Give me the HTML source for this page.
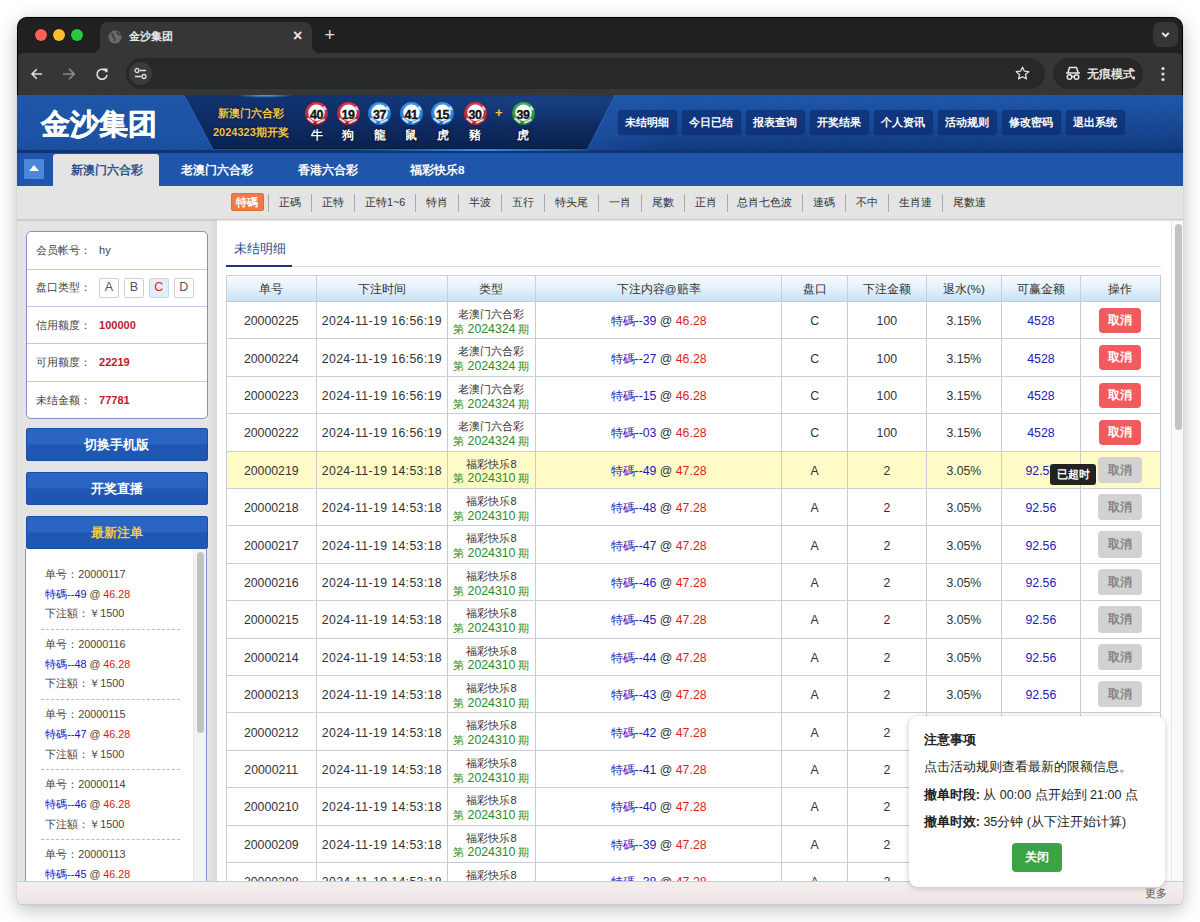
<!DOCTYPE html>
<html><head><meta charset="utf-8">
<style>
*{margin:0;padding:0;box-sizing:border-box}
html,body{width:1200px;height:922px;overflow:hidden;background:#fff;font-family:"Liberation Sans",sans-serif}
.abs{position:absolute}
#win{position:absolute;left:17px;top:17px;width:1166px;height:888px;border-radius:10px 10px 6px 6px;overflow:hidden;background:#202020;box-shadow:0 5px 20px rgba(0,0,0,.25),0 0 2px rgba(0,0,0,.15)}
#ring{position:absolute;left:0;top:0;width:1166px;height:90px;border:1px solid #000;border-bottom:none;border-radius:10px 10px 0 0;pointer-events:none}
/* chrome */
.tl{position:absolute;top:12px;width:12px;height:12px;border-radius:50%;box-shadow:0 0 0 .6px rgba(0,0,0,.35)}
#tab{position:absolute;left:83px;top:5px;width:212px;height:31px;background:#363636;border-radius:8px 8px 0 0}
#tab:before,#tab:after{content:"";position:absolute;bottom:0;width:8px;height:8px}
#tab:before{left:-8px;background:radial-gradient(circle at 0 0,transparent 8px,#363636 8.5px)}
#tab:after{right:-8px;background:radial-gradient(circle at 100% 0,transparent 8px,#363636 8.5px)}
#toolbar{position:absolute;left:0;top:36px;width:1166px;height:42px;background:#363636;border-radius:6px 6px 0 0}
#omni{position:absolute;left:109px;top:5px;width:919px;height:31px;border-radius:16px;background:#282828}
#incog{position:absolute;left:1036px;top:5px;width:90px;height:31px;border-radius:16px;background:#282828;color:#e6e6e6;font-size:11.5px;font-weight:bold}
/* page */
#page{position:absolute;left:0;top:78px;width:1166px;height:810px;background:#e5e5e5;overflow:hidden}

#hdr{position:absolute;left:0;top:0;width:1166px;height:58px;background-image:repeating-linear-gradient(135deg,rgba(255,255,255,.015) 0 1.5px,transparent 1.5px 4px),linear-gradient(180deg,#1d55a8 0%,#1c52a4 70%,#1a4c9c 95%)}
#hdrR{position:absolute;left:540px;top:0;width:626px;height:55px;background:linear-gradient(180deg,rgba(0,15,60,0) 10%,rgba(0,15,60,.32) 100%);-webkit-mask-image:linear-gradient(90deg,transparent,#000 120px)}
#hband{position:absolute;left:0;top:55px;width:1166px;height:2.5px;background:#0d3474}
#dark{position:absolute;left:0;top:0}
#glow{position:absolute;left:196px;top:52px;width:375px;height:2px;background:linear-gradient(90deg,rgba(60,160,255,0),rgba(80,180,255,.9) 50%,rgba(60,160,255,0))}
#glow2{position:absolute;left:218px;top:0;width:60px;height:3px;background:radial-gradient(ellipse at 50% 0,rgba(90,190,255,.9),rgba(60,160,255,0) 70%)}
#logo{position:absolute;left:24px;top:9.5px;font-size:29px;font-weight:bold;color:#fff;-webkit-text-stroke:.5px #fff;letter-spacing:0px}
.ky{position:absolute;font-size:11px;font-weight:bold;color:#f3c33f;white-space:nowrap;text-shadow:0 0 2px #051433}
.ball{position:absolute;top:7px;width:23px;height:23px;border-radius:50%}
.ball b{position:absolute;left:3px;top:4.5px;width:17px;height:16px;font-size:12.5px;line-height:16px;-webkit-text-stroke:.35px #111;text-align:center;color:#111;letter-spacing:-.5px}
.zod{position:absolute;top:32px;width:23px;text-align:center;font-size:12px;font-weight:bold;color:#fff;text-shadow:0 0 1px #000,0 0 2px #000}
.red{background:radial-gradient(circle at 50% 45%,#fff 0 7.5px,#c82b3e 8px,#a81d2f 11.5px)}
.blue{background:radial-gradient(circle at 50% 45%,#fff 0 7.5px,#2f8fe0 8px,#1a67c0 11.5px)}
.green{background:radial-gradient(circle at 50% 45%,#fff 0 7.5px,#3aa055 8px,#1f7a38 11.5px)}
.nb{position:absolute;top:15.3px;width:58.8px;height:25.2px;background:rgba(10,40,105,.6);border-radius:3px;box-shadow:0 0 0 1px rgba(30,70,140,.45);color:#fff;font-size:11px;font-weight:bold;text-align:center;line-height:24.5px;box-shadow:0 0 1px rgba(0,0,0,.2)}
#nav{position:absolute;left:0;top:57.5px;width:1166px;height:33px;background:#1f56ab}
#tog{position:absolute;left:7px;top:6.5px;width:20px;height:19.5px;background:#4a88dc;border-radius:1px}
#tog:after{content:"";position:absolute;left:4.5px;top:6px;border-left:5.5px solid transparent;border-right:5.5px solid transparent;border-bottom:6.5px solid #fff}
.tb{position:absolute;top:0;height:33px;line-height:34px;font-size:11.8px;font-weight:bold;color:#fff;white-space:nowrap}
#tact{position:absolute;left:35.5px;top:1px;width:106.5px;height:32px;background:#e4e4e4;border-radius:3px 3px 0 0}
#sub{position:absolute;left:0;top:90.5px;width:1166px;height:34.5px;background:#e4e4e4;border-bottom:1px solid #c9c9c9;box-shadow:0 1px 1px rgba(0,0,0,.08)}
.si{position:absolute;top:0;height:34px;line-height:33px;font-size:10.8px;color:#333;white-space:nowrap}
.sep{position:absolute;top:8px;width:1px;height:18px;background:#aaa}
#sact{position:absolute;left:213.5px;top:7.5px;width:33px;height:18px;background:#f07a45;border:1px solid #e8683a;border-radius:2px;color:#fff;font-weight:bold;font-size:11px;line-height:16px;text-align:center}

#side{position:absolute;left:0;top:125px;width:200px;height:661px;background:#e4e4e4}
#sidesh{position:absolute;left:191px;top:125px;width:9px;height:661px;background:linear-gradient(90deg,#e4e4e4,#d9d9d9)}
#info{position:absolute;left:8.6px;top:136px;width:182.8px;height:187.5px;border:1px solid #7e92c4;border-radius:5px;background:#fff;overflow:hidden}
.ir{position:absolute;left:0;width:100%;height:37.5px;border-bottom:1px solid #bccbe8;font-size:10.8px;color:#444}
.ir .lb{position:absolute;left:9px;top:0;line-height:37px}
.ir .vl{position:absolute;left:72.5px;top:0;line-height:37px}
.ir .rv{color:#c0182a;font-weight:bold;font-size:11px}
.pk{position:absolute;top:9px;width:19.5px;height:19.5px;border:1px solid #cfcfcf;border-radius:2px;background:#fff;text-align:center;line-height:17.5px;font-size:12.5px;color:#555}
.sbtn{position:absolute;left:8.9px;width:181.7px;height:33.6px;border:1px solid #1b4ea6;border-radius:2px;background:linear-gradient(180deg,#2b66c4 0%,#2a63c0 48%,#1f57b3 52%,#1f56b1 100%);color:#fff;font-weight:bold;font-size:12.5px;text-align:center;line-height:32px}
#list{position:absolute;left:8.2px;top:454px;width:182px;height:340px;border:1px solid #7e92c4;border-top:none;background:#fff;overflow:hidden}
.li{position:absolute;left:19px;font-size:10.8px;color:#444;white-space:nowrap}
.dash{position:absolute;left:15px;width:139px;border-top:1px dashed #bbb}
#lscr{position:absolute;left:167px;top:0;width:14px;height:340px;background:#f3f3f3;border-left:1px solid #e8e8e8}
#lthumb{position:absolute;left:3px;top:3px;width:7px;height:181px;border-radius:4px;background:#c2c2c2}
#main{position:absolute;left:200px;top:125px;width:966px;height:661px;background:#fff;overflow:hidden}
#mscr{position:absolute;left:953.5px;top:0;width:12.5px;height:661px;background:#fafafa;border-left:1px solid #e6e6e6}
#mthumb{position:absolute;left:3px;top:4px;width:7px;height:206px;border-radius:4px;background:#c2c2c2}
#ttl{position:absolute;left:17px;top:21px;font-size:12.5px;color:#2a4b8d}
#uline{position:absolute;left:9px;top:145px}
#foot{position:absolute;left:0;top:786px;width:1166px;height:24px;border-top:1px solid #c3cde0;border-bottom:1px solid #c3cde0;background:linear-gradient(180deg,#f8eded,#ebe6e6)}

#tbl{position:absolute;left:9.2px;top:54.5px;width:935px;height:620px;font-size:12.3px;color:#333}
.th{position:absolute;top:0;height:27px;background:linear-gradient(180deg,#f8fbfe,#e6f1fb 45%,#c8e2f4);border-top:1px solid #cdd0d8;border-bottom:1px solid #c0c8d4}
.vl2{position:absolute;top:0;width:1px;height:620px;background:#c9cdd8}
.hl{position:absolute;left:0;width:935px;height:1px;background:#c9cdd8}
.c{position:absolute;text-align:center;white-space:nowrap;margin-top:1px}
.g{color:#2b8a2b}
.bl{color:#2020b8}
.rd{color:#e01c1c}
.btr{position:absolute;width:41.5px;height:25px;border-radius:4px;background:#f25b5e;color:#fff;font-size:12.3px;font-weight:bold;text-align:center;line-height:25px}
.btg{position:absolute;width:44px;height:26.5px;border-radius:4px;background:#d2d2d2;color:#858585;font-size:12.3px;font-weight:bold;text-align:center;line-height:26.5px}

#tip{position:absolute;left:1033px;top:369px;width:46.3px;height:21.3px;background:#222;border-radius:3px;color:#fff;font-size:10.8px;font-weight:bold;text-align:center;line-height:21px}
#pop{position:absolute;left:891.75px;top:620.8px;width:256px;height:171px;background:#fff;border-radius:9px;box-shadow:0 1px 6px rgba(0,0,0,.22)}
#pop .pt{position:absolute;left:15px;white-space:nowrap;font-size:12.5px;color:#222}
#pclose{position:absolute;left:102.75px;top:222.4px;width:50.5px;height:29.3px;background:#3aa346;border-radius:4px;color:#fff;font-size:12px;text-align:center;line-height:29px}
</style></head><body>
<div id="win">
  <div class="tl" style="left:18px;background:#fe5f57"></div>
  <div class="tl" style="left:36px;background:#febc2e"></div>
  <div class="tl" style="left:54px;background:#28c840"></div>
  <div id="tab">
    <svg class="abs" style="left:8px;top:8px" width="14" height="14" viewBox="0 0 14 14"><circle cx="7" cy="7" r="6.5" fill="#6a6a6a"/><path d="M3 3.5c1.5.5 2.5 1.2 2 2.6-.4 1 .8 1.6 1.6 2 .6.4.2 1.8-.3 2.9M9.5 1.8c-.6.9-.3 1.8.6 2.2 1 .5 2 .3 2.8.9" stroke="#363636" stroke-width="1.4" fill="none"/></svg>
    <div class="abs" style="left:29px;top:6.5px;font-size:11px;color:#e8e8e8;font-weight:bold">金沙集团</div>
    <div class="abs" style="left:193px;top:5px;font-size:16px;color:#e8e8e8;font-weight:bold">×</div>
  </div>
  <div class="abs" style="left:307.5px;top:8px;font-size:18px;color:#e0e0e0">+</div>
  <div class="abs" style="left:1136px;top:5px;width:25px;height:25px;border-radius:7px;background:#363636"><svg class="abs" style="left:7px;top:9px" width="11" height="7" viewBox="0 0 11 7"><path d="M2.2 1.8l3.3 3.3 3.3-3.3" stroke="#f0f0f0" stroke-width="1.9" fill="none"/></svg></div>
  <div id="toolbar">
    <svg class="abs" style="left:12px;top:14px" width="14" height="14" viewBox="0 0 14 14"><path d="M13 7H3M7.8 2.2L3 7l4.8 4.8" stroke="#e0e0e0" stroke-width="1.6" fill="none"/></svg>
    <svg class="abs" style="left:45px;top:14px" width="14" height="14" viewBox="0 0 14 14"><path d="M1 7h11M7 1.8L12.2 7 7 12.2" stroke="#8a8a8a" stroke-width="1.6" fill="none"/></svg>
    <svg class="abs" style="left:78px;top:14px" width="14" height="14" viewBox="0 0 14 14"><path d="M11.6 5.2A5 5 0 1 0 12 8" stroke="#e0e0e0" stroke-width="1.6" fill="none"/><path d="M8.5 1.5h4v4z" fill="#e0e0e0"/></svg>
    <div id="omni">
      <div class="abs" style="left:3px;top:4px;width:23px;height:23px;border-radius:50%;background:#3a3a3a"></div>
      <svg class="abs" style="left:8px;top:9px" width="13" height="13" viewBox="0 0 13 13"><circle cx="3" cy="3.5" r="2" stroke="#e0e0e0" stroke-width="1.3" fill="none"/><path d="M6 3.5h6M1 9.5h6" stroke="#e0e0e0" stroke-width="1.3"/><circle cx="10" cy="9.5" r="2" stroke="#e0e0e0" stroke-width="1.3" fill="none"/></svg>
      <svg class="abs" style="left:889px;top:8px" width="15" height="15" viewBox="0 0 15 15"><path d="M7.5 1.2l1.9 4 4.3.5-3.2 2.9.9 4.3-3.9-2.2-3.9 2.2.9-4.3L1.3 5.7l4.3-.5z" stroke="#e0e0e0" stroke-width="1.3" fill="none" stroke-linejoin="round"/></svg>
    </div>
    <div id="incog">
      <svg class="abs" style="left:12px;top:8px" width="16" height="15" viewBox="0 0 16 15"><path d="M3 6.5l1.5-5h7l1.5 5M1 7h14" stroke="#e6e6e6" stroke-width="1.5" fill="none"/><circle cx="4.5" cy="11" r="2.3" stroke="#e6e6e6" stroke-width="1.5" fill="none"/><circle cx="11.5" cy="11" r="2.3" stroke="#e6e6e6" stroke-width="1.5" fill="none"/><path d="M6.8 10.5h2.4" stroke="#e6e6e6" stroke-width="1.3"/></svg>
      <div class="abs" style="left:34px;top:9px">无痕模式</div>
    </div>
    <svg class="abs" style="left:1144px;top:13px" width="4" height="16" viewBox="0 0 4 16"><circle cx="2" cy="2.5" r="1.6" fill="#e0e0e0"/><circle cx="2" cy="8" r="1.6" fill="#e0e0e0"/><circle cx="2" cy="13.5" r="1.6" fill="#e0e0e0"/></svg>
  </div>
  <div id="ring"></div>
  <div id="page">

  <div id="hdr"></div><div id="hdrR"></div><div id="hband"></div>
  <svg id="dark" width="620" height="58" viewBox="0 0 620 58"><defs><linearGradient id="dg" x1="0" y1="0" x2="0" y2="1"><stop offset="0" stop-color="#113470"/><stop offset=".55" stop-color="#0e2b62"/><stop offset="1" stop-color="#0a2150"/></linearGradient><radialGradient id="dr" cx="0.85" cy="0.1" r="0.5"><stop offset="0" stop-color="#1a4488" stop-opacity=".75"/><stop offset="1" stop-color="#1a4488" stop-opacity="0"/></radialGradient><linearGradient id="gl" x1="0" y1="0" x2="1" y2="0"><stop offset="0" stop-color="#3aa0f0" stop-opacity="0"/><stop offset=".55" stop-color="#4ab0ff" stop-opacity=".85"/><stop offset="1" stop-color="#3aa0f0" stop-opacity=".2"/></linearGradient></defs><polygon points="167,0 598,0 570.5,54 196,54" fill="url(#dg)"/><polygon points="167,0 598,0 570.5,54 196,54" fill="url(#dr)"/><path d="M196 53.5H570.5" stroke="#061a45" stroke-width="1"/><rect x="330" y="54.3" width="241" height="1.6" fill="url(#gl)"/><path d="M167 0L196 54M598 0L570.5 54" stroke="#3d7cd0" stroke-opacity=".5" stroke-width="1"/></svg><div id="glow2"></div>
  <div id="logo">金沙集团</div>
  <div class="ky" style="left:201px;top:11px">新澳门六合彩</div>
  <div class="ky" style="left:196px;top:30px">2024323期开奖</div>
  <div class="ball" style="left:288px"><svg width="23" height="23" viewBox="0 0 23 23" style="position:absolute;left:0;top:0"><defs><radialGradient id="gred" cx="50%" cy="40%" r="60%"><stop offset="0.55" stop-color="#d23a4c"/><stop offset="1" stop-color="#a01a2c"/></radialGradient></defs><circle cx="11.5" cy="11.5" r="11.5" fill="url(#gred)"/><circle cx="11.5" cy="10.8" r="8.2" fill="#fff"/><path d="M2.6 16.3L8.3 20.6M12 21.2L19.6 17.4M18.6 4.6L21 8" stroke="#fff" stroke-opacity=".8" stroke-width="2" fill="none"/></svg><b>40</b></div><div class="zod" style="left:288px">牛</div>
  <div class="ball" style="left:319.5px"><svg width="23" height="23" viewBox="0 0 23 23" style="position:absolute;left:0;top:0"><defs><radialGradient id="gred" cx="50%" cy="40%" r="60%"><stop offset="0.55" stop-color="#d23a4c"/><stop offset="1" stop-color="#a01a2c"/></radialGradient></defs><circle cx="11.5" cy="11.5" r="11.5" fill="url(#gred)"/><circle cx="11.5" cy="10.8" r="8.2" fill="#fff"/><path d="M2.6 16.3L8.3 20.6M12 21.2L19.6 17.4M18.6 4.6L21 8" stroke="#fff" stroke-opacity=".8" stroke-width="2" fill="none"/></svg><b>19</b></div><div class="zod" style="left:319.5px">狗</div>
  <div class="ball" style="left:351px"><svg width="23" height="23" viewBox="0 0 23 23" style="position:absolute;left:0;top:0"><defs><radialGradient id="gblue" cx="50%" cy="40%" r="60%"><stop offset="0.55" stop-color="#3a9ae8"/><stop offset="1" stop-color="#1763bd"/></radialGradient></defs><circle cx="11.5" cy="11.5" r="11.5" fill="url(#gblue)"/><circle cx="11.5" cy="10.8" r="8.2" fill="#fff"/><path d="M2.6 16.3L8.3 20.6M12 21.2L19.6 17.4M18.6 4.6L21 8" stroke="#fff" stroke-opacity=".8" stroke-width="2" fill="none"/></svg><b>37</b></div><div class="zod" style="left:351px">龍</div>
  <div class="ball" style="left:382.5px"><svg width="23" height="23" viewBox="0 0 23 23" style="position:absolute;left:0;top:0"><defs><radialGradient id="gblue" cx="50%" cy="40%" r="60%"><stop offset="0.55" stop-color="#3a9ae8"/><stop offset="1" stop-color="#1763bd"/></radialGradient></defs><circle cx="11.5" cy="11.5" r="11.5" fill="url(#gblue)"/><circle cx="11.5" cy="10.8" r="8.2" fill="#fff"/><path d="M2.6 16.3L8.3 20.6M12 21.2L19.6 17.4M18.6 4.6L21 8" stroke="#fff" stroke-opacity=".8" stroke-width="2" fill="none"/></svg><b>41</b></div><div class="zod" style="left:382.5px">鼠</div>
  <div class="ball" style="left:414px"><svg width="23" height="23" viewBox="0 0 23 23" style="position:absolute;left:0;top:0"><defs><radialGradient id="gblue" cx="50%" cy="40%" r="60%"><stop offset="0.55" stop-color="#3a9ae8"/><stop offset="1" stop-color="#1763bd"/></radialGradient></defs><circle cx="11.5" cy="11.5" r="11.5" fill="url(#gblue)"/><circle cx="11.5" cy="10.8" r="8.2" fill="#fff"/><path d="M2.6 16.3L8.3 20.6M12 21.2L19.6 17.4M18.6 4.6L21 8" stroke="#fff" stroke-opacity=".8" stroke-width="2" fill="none"/></svg><b>15</b></div><div class="zod" style="left:414px">虎</div>
  <div class="ball" style="left:446.5px"><svg width="23" height="23" viewBox="0 0 23 23" style="position:absolute;left:0;top:0"><defs><radialGradient id="gred" cx="50%" cy="40%" r="60%"><stop offset="0.55" stop-color="#d23a4c"/><stop offset="1" stop-color="#a01a2c"/></radialGradient></defs><circle cx="11.5" cy="11.5" r="11.5" fill="url(#gred)"/><circle cx="11.5" cy="10.8" r="8.2" fill="#fff"/><path d="M2.6 16.3L8.3 20.6M12 21.2L19.6 17.4M18.6 4.6L21 8" stroke="#fff" stroke-opacity=".8" stroke-width="2" fill="none"/></svg><b>30</b></div><div class="zod" style="left:446.5px">豬</div>
  <div class="abs" style="left:478px;top:10px;font-size:13px;font-weight:bold;color:#f3c33f">+</div>
  <div class="ball" style="left:494.5px"><svg width="23" height="23" viewBox="0 0 23 23" style="position:absolute;left:0;top:0"><defs><radialGradient id="ggreen" cx="50%" cy="40%" r="60%"><stop offset="0.55" stop-color="#45a85c"/><stop offset="1" stop-color="#1d7335"/></radialGradient></defs><circle cx="11.5" cy="11.5" r="11.5" fill="url(#ggreen)"/><circle cx="11.5" cy="10.8" r="8.2" fill="#fff"/><path d="M2.6 16.3L8.3 20.6M12 21.2L19.6 17.4M18.6 4.6L21 8" stroke="#fff" stroke-opacity=".8" stroke-width="2" fill="none"/></svg><b>39</b></div><div class="zod" style="left:494.5px">虎</div>
  <div class="nb" style="left:601px">未结明细</div>
  <div class="nb" style="left:665px">今日已结</div>
  <div class="nb" style="left:729px">报表查询</div>
  <div class="nb" style="left:793px">开奖结果</div>
  <div class="nb" style="left:857px">个人资讯</div>
  <div class="nb" style="left:921px">活动规则</div>
  <div class="nb" style="left:985px">修改密码</div>
  <div class="nb" style="left:1049px">退出系统</div>
<div id="side"></div><div id="sidesh"></div>
<div id="info"><div class="ir" style="top:0.0px"><span class="lb">会员帐号：</span><span class="vl"><span style="font-size:11px">hy</span></span></div><div class="ir" style="top:37.4px"><span class="lb">盘口类型：</span><span class="vl"></span><div class="pk" style="left:72.5px;">A</div><div class="pk" style="left:97.5px;">B</div><div class="pk" style="left:122.5px;background:#e3eef9;color:#e02020;border-color:#c8d8ea">C</div><div class="pk" style="left:147.5px;">D</div></div><div class="ir" style="top:74.8px"><span class="lb">信用额度：</span><span class="vl"><span class="rv">100000</span></span></div><div class="ir" style="top:112.2px"><span class="lb">可用额度：</span><span class="vl"><span class="rv">22219</span></span></div><div class="ir" style="top:149.6px;border-bottom:none"><span class="lb">未结金额：</span><span class="vl"><span class="rv">77781</span></span></div></div>
<div class="sbtn" style="top:332.7px">切换手机版</div>
<div class="sbtn" style="top:376.6px">开奖直播</div>
<div class="sbtn" style="top:420.5px;color:#f5c842">最新注单</div>
<div id="list"><div class="li" style="top:18.5px">单号：20000117</div><div class="li" style="top:38.5px"><span style="color:#1515c8">特碼--49</span> @ <span style="color:#e01818">46.28</span></div><div class="li" style="top:58.2px">下注額：￥1500</div><div class="dash" style="top:79.5px"></div><div class="li" style="top:88.7px">单号：20000116</div><div class="li" style="top:108.7px"><span style="color:#1515c8">特碼--48</span> @ <span style="color:#e01818">46.28</span></div><div class="li" style="top:128.4px">下注額：￥1500</div><div class="dash" style="top:149.7px"></div><div class="li" style="top:158.9px">单号：20000115</div><div class="li" style="top:178.9px"><span style="color:#1515c8">特碼--47</span> @ <span style="color:#e01818">46.28</span></div><div class="li" style="top:198.6px">下注額：￥1500</div><div class="dash" style="top:219.9px"></div><div class="li" style="top:229.1px">单号：20000114</div><div class="li" style="top:249.1px"><span style="color:#1515c8">特碼--46</span> @ <span style="color:#e01818">46.28</span></div><div class="li" style="top:268.8px">下注額：￥1500</div><div class="dash" style="top:290.1px"></div><div class="li" style="top:299.3px">单号：20000113</div><div class="li" style="top:319.3px"><span style="color:#1515c8">特碼--45</span> @ <span style="color:#e01818">46.28</span></div><div class="li" style="top:339.0px">下注額：￥1500</div><div class="dash" style="top:360.3px"></div><div id="lscr"><div id="lthumb"></div></div></div>
<div id="main"><div id="ttl">未结明细</div><div class="abs" style="left:9px;top:45px;width:66px;height:2px;background:#1d3579"></div><div class="abs" style="left:75px;top:46px;width:869px;height:1px;background:#dcdcdc"></div><div id="tbl"><div class="th" style="left:0;width:935px"></div><div class="abs" style="left:0;top:176.6px;width:935px;height:37.4px;background:#fffbc7"></div><div class="c" style="left:0.0px;width:90.1px;top:0;line-height:27px;font-size:11.8px">单号</div><div class="c" style="left:90.1px;width:131.2px;top:0;line-height:27px;font-size:11.8px">下注时间</div><div class="c" style="left:221.3px;width:88.0px;top:0;line-height:27px;font-size:11.8px">类型</div><div class="c" style="left:309.3px;width:246.2px;top:0;line-height:27px;font-size:11.8px">下注内容@赔率</div><div class="c" style="left:555.5px;width:65.8px;top:0;line-height:27px;font-size:11.8px">盘口</div><div class="c" style="left:621.3px;width:78.8px;top:0;line-height:27px;font-size:11.8px">下注金额</div><div class="c" style="left:700.1px;width:75.2px;top:0;line-height:27px;font-size:11.8px">退水(%)</div><div class="c" style="left:775.3px;width:78.8px;top:0;line-height:27px;font-size:11.8px">可赢金额</div><div class="c" style="left:854.1px;width:80.2px;top:0;line-height:27px;font-size:11.8px">操作</div><div class="vl2" style="left:-0.5px"></div><div class="vl2" style="left:89.6px"></div><div class="vl2" style="left:220.8px"></div><div class="vl2" style="left:308.8px"></div><div class="vl2" style="left:555.0px"></div><div class="vl2" style="left:620.8px"></div><div class="vl2" style="left:699.6px"></div><div class="vl2" style="left:774.8px"></div><div class="vl2" style="left:853.6px"></div><div class="vl2" style="left:933.8px"></div><div class="hl" style="top:63.9px"></div><div class="c" style="left:0.0px;width:90.1px;top:37.7px;line-height:16px">20000225</div><div class="c" style="left:90.1px;width:131.2px;top:37.7px;line-height:16px;letter-spacing:.37px">2024-11-19 16:56:19</div><div class="c" style="left:221.3px;width:88.0px;top:30.7px;line-height:14.7px;font-size:11px;margin-top:1.8px">老澳门六合彩<br><span class="g">第 <span style="font-size:12.3px">2024324</span> 期</span></div><div class="c" style="left:309.3px;width:246.2px;top:37.7px;line-height:16px"><span class="bl">特碼--39</span> @ <span class="rd">46.28</span></div><div class="c" style="left:555.5px;width:65.8px;top:37.7px;line-height:16px">C</div><div class="c" style="left:621.3px;width:78.8px;top:37.7px;line-height:16px">100</div><div class="c" style="left:700.1px;width:75.2px;top:37.7px;line-height:16px">3.15%</div><div class="c bl" style="left:775.3px;width:78.8px;top:37.7px;line-height:16px">4528</div><div class="btr" style="left:873.3px;top:33.2px">取消</div><div class="hl" style="top:101.3px"></div><div class="c" style="left:0.0px;width:90.1px;top:75.1px;line-height:16px">20000224</div><div class="c" style="left:90.1px;width:131.2px;top:75.1px;line-height:16px;letter-spacing:.37px">2024-11-19 16:56:19</div><div class="c" style="left:221.3px;width:88.0px;top:68.1px;line-height:14.7px;font-size:11px;margin-top:1.8px">老澳门六合彩<br><span class="g">第 <span style="font-size:12.3px">2024324</span> 期</span></div><div class="c" style="left:309.3px;width:246.2px;top:75.1px;line-height:16px"><span class="bl">特碼--27</span> @ <span class="rd">46.28</span></div><div class="c" style="left:555.5px;width:65.8px;top:75.1px;line-height:16px">C</div><div class="c" style="left:621.3px;width:78.8px;top:75.1px;line-height:16px">100</div><div class="c" style="left:700.1px;width:75.2px;top:75.1px;line-height:16px">3.15%</div><div class="c bl" style="left:775.3px;width:78.8px;top:75.1px;line-height:16px">4528</div><div class="btr" style="left:873.3px;top:70.6px">取消</div><div class="hl" style="top:138.7px"></div><div class="c" style="left:0.0px;width:90.1px;top:112.5px;line-height:16px">20000223</div><div class="c" style="left:90.1px;width:131.2px;top:112.5px;line-height:16px;letter-spacing:.37px">2024-11-19 16:56:19</div><div class="c" style="left:221.3px;width:88.0px;top:105.5px;line-height:14.7px;font-size:11px;margin-top:1.8px">老澳门六合彩<br><span class="g">第 <span style="font-size:12.3px">2024324</span> 期</span></div><div class="c" style="left:309.3px;width:246.2px;top:112.5px;line-height:16px"><span class="bl">特碼--15</span> @ <span class="rd">46.28</span></div><div class="c" style="left:555.5px;width:65.8px;top:112.5px;line-height:16px">C</div><div class="c" style="left:621.3px;width:78.8px;top:112.5px;line-height:16px">100</div><div class="c" style="left:700.1px;width:75.2px;top:112.5px;line-height:16px">3.15%</div><div class="c bl" style="left:775.3px;width:78.8px;top:112.5px;line-height:16px">4528</div><div class="btr" style="left:873.3px;top:108.0px">取消</div><div class="hl" style="top:176.1px"></div><div class="c" style="left:0.0px;width:90.1px;top:149.9px;line-height:16px">20000222</div><div class="c" style="left:90.1px;width:131.2px;top:149.9px;line-height:16px;letter-spacing:.37px">2024-11-19 16:56:19</div><div class="c" style="left:221.3px;width:88.0px;top:142.9px;line-height:14.7px;font-size:11px;margin-top:1.8px">老澳门六合彩<br><span class="g">第 <span style="font-size:12.3px">2024324</span> 期</span></div><div class="c" style="left:309.3px;width:246.2px;top:149.9px;line-height:16px"><span class="bl">特碼--03</span> @ <span class="rd">46.28</span></div><div class="c" style="left:555.5px;width:65.8px;top:149.9px;line-height:16px">C</div><div class="c" style="left:621.3px;width:78.8px;top:149.9px;line-height:16px">100</div><div class="c" style="left:700.1px;width:75.2px;top:149.9px;line-height:16px">3.15%</div><div class="c bl" style="left:775.3px;width:78.8px;top:149.9px;line-height:16px">4528</div><div class="btr" style="left:873.3px;top:145.4px">取消</div><div class="hl" style="top:213.5px"></div><div class="c" style="left:0.0px;width:90.1px;top:187.3px;line-height:16px">20000219</div><div class="c" style="left:90.1px;width:131.2px;top:187.3px;line-height:16px;letter-spacing:.37px">2024-11-19 14:53:18</div><div class="c" style="left:221.3px;width:88.0px;top:180.3px;line-height:14.7px;font-size:11px;margin-top:1.8px">福彩快乐8<br><span class="g">第 <span style="font-size:12.3px">2024310</span> 期</span></div><div class="c" style="left:309.3px;width:246.2px;top:187.3px;line-height:16px"><span class="bl">特碼--49</span> @ <span class="rd">47.28</span></div><div class="c" style="left:555.5px;width:65.8px;top:187.3px;line-height:16px">A</div><div class="c" style="left:621.3px;width:78.8px;top:187.3px;line-height:16px">2</div><div class="c" style="left:700.1px;width:75.2px;top:187.3px;line-height:16px">3.05%</div><div class="c bl" style="left:775.3px;width:78.8px;top:187.3px;line-height:16px">92.56</div><div class="btg" style="left:872.2px;top:182.0px">取消</div><div class="hl" style="top:250.9px"></div><div class="c" style="left:0.0px;width:90.1px;top:224.7px;line-height:16px">20000218</div><div class="c" style="left:90.1px;width:131.2px;top:224.7px;line-height:16px;letter-spacing:.37px">2024-11-19 14:53:18</div><div class="c" style="left:221.3px;width:88.0px;top:217.7px;line-height:14.7px;font-size:11px;margin-top:1.8px">福彩快乐8<br><span class="g">第 <span style="font-size:12.3px">2024310</span> 期</span></div><div class="c" style="left:309.3px;width:246.2px;top:224.7px;line-height:16px"><span class="bl">特碼--48</span> @ <span class="rd">47.28</span></div><div class="c" style="left:555.5px;width:65.8px;top:224.7px;line-height:16px">A</div><div class="c" style="left:621.3px;width:78.8px;top:224.7px;line-height:16px">2</div><div class="c" style="left:700.1px;width:75.2px;top:224.7px;line-height:16px">3.05%</div><div class="c bl" style="left:775.3px;width:78.8px;top:224.7px;line-height:16px">92.56</div><div class="btg" style="left:872.2px;top:219.4px">取消</div><div class="hl" style="top:288.3px"></div><div class="c" style="left:0.0px;width:90.1px;top:262.1px;line-height:16px">20000217</div><div class="c" style="left:90.1px;width:131.2px;top:262.1px;line-height:16px;letter-spacing:.37px">2024-11-19 14:53:18</div><div class="c" style="left:221.3px;width:88.0px;top:255.1px;line-height:14.7px;font-size:11px;margin-top:1.8px">福彩快乐8<br><span class="g">第 <span style="font-size:12.3px">2024310</span> 期</span></div><div class="c" style="left:309.3px;width:246.2px;top:262.1px;line-height:16px"><span class="bl">特碼--47</span> @ <span class="rd">47.28</span></div><div class="c" style="left:555.5px;width:65.8px;top:262.1px;line-height:16px">A</div><div class="c" style="left:621.3px;width:78.8px;top:262.1px;line-height:16px">2</div><div class="c" style="left:700.1px;width:75.2px;top:262.1px;line-height:16px">3.05%</div><div class="c bl" style="left:775.3px;width:78.8px;top:262.1px;line-height:16px">92.56</div><div class="btg" style="left:872.2px;top:256.8px">取消</div><div class="hl" style="top:325.7px"></div><div class="c" style="left:0.0px;width:90.1px;top:299.5px;line-height:16px">20000216</div><div class="c" style="left:90.1px;width:131.2px;top:299.5px;line-height:16px;letter-spacing:.37px">2024-11-19 14:53:18</div><div class="c" style="left:221.3px;width:88.0px;top:292.5px;line-height:14.7px;font-size:11px;margin-top:1.8px">福彩快乐8<br><span class="g">第 <span style="font-size:12.3px">2024310</span> 期</span></div><div class="c" style="left:309.3px;width:246.2px;top:299.5px;line-height:16px"><span class="bl">特碼--46</span> @ <span class="rd">47.28</span></div><div class="c" style="left:555.5px;width:65.8px;top:299.5px;line-height:16px">A</div><div class="c" style="left:621.3px;width:78.8px;top:299.5px;line-height:16px">2</div><div class="c" style="left:700.1px;width:75.2px;top:299.5px;line-height:16px">3.05%</div><div class="c bl" style="left:775.3px;width:78.8px;top:299.5px;line-height:16px">92.56</div><div class="btg" style="left:872.2px;top:294.2px">取消</div><div class="hl" style="top:363.1px"></div><div class="c" style="left:0.0px;width:90.1px;top:336.9px;line-height:16px">20000215</div><div class="c" style="left:90.1px;width:131.2px;top:336.9px;line-height:16px;letter-spacing:.37px">2024-11-19 14:53:18</div><div class="c" style="left:221.3px;width:88.0px;top:329.9px;line-height:14.7px;font-size:11px;margin-top:1.8px">福彩快乐8<br><span class="g">第 <span style="font-size:12.3px">2024310</span> 期</span></div><div class="c" style="left:309.3px;width:246.2px;top:336.9px;line-height:16px"><span class="bl">特碼--45</span> @ <span class="rd">47.28</span></div><div class="c" style="left:555.5px;width:65.8px;top:336.9px;line-height:16px">A</div><div class="c" style="left:621.3px;width:78.8px;top:336.9px;line-height:16px">2</div><div class="c" style="left:700.1px;width:75.2px;top:336.9px;line-height:16px">3.05%</div><div class="c bl" style="left:775.3px;width:78.8px;top:336.9px;line-height:16px">92.56</div><div class="btg" style="left:872.2px;top:331.6px">取消</div><div class="hl" style="top:400.5px"></div><div class="c" style="left:0.0px;width:90.1px;top:374.3px;line-height:16px">20000214</div><div class="c" style="left:90.1px;width:131.2px;top:374.3px;line-height:16px;letter-spacing:.37px">2024-11-19 14:53:18</div><div class="c" style="left:221.3px;width:88.0px;top:367.3px;line-height:14.7px;font-size:11px;margin-top:1.8px">福彩快乐8<br><span class="g">第 <span style="font-size:12.3px">2024310</span> 期</span></div><div class="c" style="left:309.3px;width:246.2px;top:374.3px;line-height:16px"><span class="bl">特碼--44</span> @ <span class="rd">47.28</span></div><div class="c" style="left:555.5px;width:65.8px;top:374.3px;line-height:16px">A</div><div class="c" style="left:621.3px;width:78.8px;top:374.3px;line-height:16px">2</div><div class="c" style="left:700.1px;width:75.2px;top:374.3px;line-height:16px">3.05%</div><div class="c bl" style="left:775.3px;width:78.8px;top:374.3px;line-height:16px">92.56</div><div class="btg" style="left:872.2px;top:369.0px">取消</div><div class="hl" style="top:437.9px"></div><div class="c" style="left:0.0px;width:90.1px;top:411.7px;line-height:16px">20000213</div><div class="c" style="left:90.1px;width:131.2px;top:411.7px;line-height:16px;letter-spacing:.37px">2024-11-19 14:53:18</div><div class="c" style="left:221.3px;width:88.0px;top:404.7px;line-height:14.7px;font-size:11px;margin-top:1.8px">福彩快乐8<br><span class="g">第 <span style="font-size:12.3px">2024310</span> 期</span></div><div class="c" style="left:309.3px;width:246.2px;top:411.7px;line-height:16px"><span class="bl">特碼--43</span> @ <span class="rd">47.28</span></div><div class="c" style="left:555.5px;width:65.8px;top:411.7px;line-height:16px">A</div><div class="c" style="left:621.3px;width:78.8px;top:411.7px;line-height:16px">2</div><div class="c" style="left:700.1px;width:75.2px;top:411.7px;line-height:16px">3.05%</div><div class="c bl" style="left:775.3px;width:78.8px;top:411.7px;line-height:16px">92.56</div><div class="btg" style="left:872.2px;top:406.4px">取消</div><div class="hl" style="top:475.3px"></div><div class="c" style="left:0.0px;width:90.1px;top:449.1px;line-height:16px">20000212</div><div class="c" style="left:90.1px;width:131.2px;top:449.1px;line-height:16px;letter-spacing:.37px">2024-11-19 14:53:18</div><div class="c" style="left:221.3px;width:88.0px;top:442.1px;line-height:14.7px;font-size:11px;margin-top:1.8px">福彩快乐8<br><span class="g">第 <span style="font-size:12.3px">2024310</span> 期</span></div><div class="c" style="left:309.3px;width:246.2px;top:449.1px;line-height:16px"><span class="bl">特碼--42</span> @ <span class="rd">47.28</span></div><div class="c" style="left:555.5px;width:65.8px;top:449.1px;line-height:16px">A</div><div class="c" style="left:621.3px;width:78.8px;top:449.1px;line-height:16px">2</div><div class="c" style="left:700.1px;width:75.2px;top:449.1px;line-height:16px">3.05%</div><div class="c bl" style="left:775.3px;width:78.8px;top:449.1px;line-height:16px">92.56</div><div class="btg" style="left:872.2px;top:443.8px">取消</div><div class="hl" style="top:512.7px"></div><div class="c" style="left:0.0px;width:90.1px;top:486.5px;line-height:16px">20000211</div><div class="c" style="left:90.1px;width:131.2px;top:486.5px;line-height:16px;letter-spacing:.37px">2024-11-19 14:53:18</div><div class="c" style="left:221.3px;width:88.0px;top:479.5px;line-height:14.7px;font-size:11px;margin-top:1.8px">福彩快乐8<br><span class="g">第 <span style="font-size:12.3px">2024310</span> 期</span></div><div class="c" style="left:309.3px;width:246.2px;top:486.5px;line-height:16px"><span class="bl">特碼--41</span> @ <span class="rd">47.28</span></div><div class="c" style="left:555.5px;width:65.8px;top:486.5px;line-height:16px">A</div><div class="c" style="left:621.3px;width:78.8px;top:486.5px;line-height:16px">2</div><div class="c" style="left:700.1px;width:75.2px;top:486.5px;line-height:16px">3.05%</div><div class="c bl" style="left:775.3px;width:78.8px;top:486.5px;line-height:16px">92.56</div><div class="btg" style="left:872.2px;top:481.2px">取消</div><div class="hl" style="top:550.1px"></div><div class="c" style="left:0.0px;width:90.1px;top:523.9px;line-height:16px">20000210</div><div class="c" style="left:90.1px;width:131.2px;top:523.9px;line-height:16px;letter-spacing:.37px">2024-11-19 14:53:18</div><div class="c" style="left:221.3px;width:88.0px;top:516.9px;line-height:14.7px;font-size:11px;margin-top:1.8px">福彩快乐8<br><span class="g">第 <span style="font-size:12.3px">2024310</span> 期</span></div><div class="c" style="left:309.3px;width:246.2px;top:523.9px;line-height:16px"><span class="bl">特碼--40</span> @ <span class="rd">47.28</span></div><div class="c" style="left:555.5px;width:65.8px;top:523.9px;line-height:16px">A</div><div class="c" style="left:621.3px;width:78.8px;top:523.9px;line-height:16px">2</div><div class="c" style="left:700.1px;width:75.2px;top:523.9px;line-height:16px">3.05%</div><div class="c bl" style="left:775.3px;width:78.8px;top:523.9px;line-height:16px">92.56</div><div class="btg" style="left:872.2px;top:518.7px">取消</div><div class="hl" style="top:587.5px"></div><div class="c" style="left:0.0px;width:90.1px;top:561.3px;line-height:16px">20000209</div><div class="c" style="left:90.1px;width:131.2px;top:561.3px;line-height:16px;letter-spacing:.37px">2024-11-19 14:53:18</div><div class="c" style="left:221.3px;width:88.0px;top:554.3px;line-height:14.7px;font-size:11px;margin-top:1.8px">福彩快乐8<br><span class="g">第 <span style="font-size:12.3px">2024310</span> 期</span></div><div class="c" style="left:309.3px;width:246.2px;top:561.3px;line-height:16px"><span class="bl">特碼--39</span> @ <span class="rd">47.28</span></div><div class="c" style="left:555.5px;width:65.8px;top:561.3px;line-height:16px">A</div><div class="c" style="left:621.3px;width:78.8px;top:561.3px;line-height:16px">2</div><div class="c" style="left:700.1px;width:75.2px;top:561.3px;line-height:16px">3.05%</div><div class="c bl" style="left:775.3px;width:78.8px;top:561.3px;line-height:16px">92.56</div><div class="btg" style="left:872.2px;top:556.1px">取消</div><div class="hl" style="top:624.9px"></div><div class="c" style="left:0.0px;width:90.1px;top:598.7px;line-height:16px">20000208</div><div class="c" style="left:90.1px;width:131.2px;top:598.7px;line-height:16px;letter-spacing:.37px">2024-11-19 14:53:18</div><div class="c" style="left:221.3px;width:88.0px;top:591.7px;line-height:14.7px;font-size:11px;margin-top:1.8px">福彩快乐8<br><span class="g">第 <span style="font-size:12.3px">2024310</span> 期</span></div><div class="c" style="left:309.3px;width:246.2px;top:598.7px;line-height:16px"><span class="bl">特碼--38</span> @ <span class="rd">47.28</span></div><div class="c" style="left:555.5px;width:65.8px;top:598.7px;line-height:16px">A</div><div class="c" style="left:621.3px;width:78.8px;top:598.7px;line-height:16px">2</div><div class="c" style="left:700.1px;width:75.2px;top:598.7px;line-height:16px">3.05%</div><div class="c bl" style="left:775.3px;width:78.8px;top:598.7px;line-height:16px">92.56</div><div class="btg" style="left:872.2px;top:593.5px">取消</div></div><div id="mscr"><div id="mthumb"></div></div></div>
<div id="foot"><div class="abs" style="left:1128px;top:4px;font-size:11px;color:#555">更多</div></div>
<div id="tip">已超时</div>
<div id="pop">
<div class="pt" style="top:16px;font-weight:bold">注意事项</div>
<div class="pt" style="top:43.5px">点击活动规则查看最新的限额信息。</div>
<div class="pt" style="top:71px"><b>撤单时段:</b> 从 00:00 点开始到 21:00 点</div>
<div class="pt" style="top:98.5px"><b>撤单时效:</b> 35分钟 (从下注开始计算)</div>
<div id="pclose" style="top:127.4px;font-weight:bold">关闭</div>
</div>
  <div id="nav">
    <div id="tog"></div>
    <div id="tact"></div>
    <div class="tb" style="left:54px;color:#30508a">新澳门六合彩</div>
    <div class="tb" style="left:164px">老澳门六合彩</div>
    <div class="tb" style="left:280.5px">香港六合彩</div>
    <div class="tb" style="left:393px">福彩快乐8</div>
  </div>
  <div id="sub">
    <div id="sact">特碼</div><div class="sep" style="left:250.75px"></div><div class="si" style="left:251.25px;width:43.50px;text-align:center">正碼</div><div class="sep" style="left:294.25px"></div><div class="si" style="left:294.75px;width:42.75px;text-align:center">正特</div><div class="sep" style="left:337.00px"></div><div class="si" style="left:337.50px;width:61.25px;text-align:center">正特1~6</div><div class="sep" style="left:398.25px"></div><div class="si" style="left:398.75px;width:43.00px;text-align:center">特肖</div><div class="sep" style="left:441.25px"></div><div class="si" style="left:441.75px;width:43.00px;text-align:center">半波</div><div class="sep" style="left:484.25px"></div><div class="si" style="left:484.75px;width:42.75px;text-align:center">五行</div><div class="sep" style="left:527.00px"></div><div class="si" style="left:527.50px;width:53.75px;text-align:center">特头尾</div><div class="sep" style="left:580.75px"></div><div class="si" style="left:581.25px;width:43.00px;text-align:center">一肖</div><div class="sep" style="left:623.75px"></div><div class="si" style="left:624.25px;width:43.00px;text-align:center">尾數</div><div class="sep" style="left:666.75px"></div><div class="si" style="left:667.25px;width:42.75px;text-align:center">正肖</div><div class="sep" style="left:709.50px"></div><div class="si" style="left:710.00px;width:75.50px;text-align:center">总肖七色波</div><div class="sep" style="left:785.00px"></div><div class="si" style="left:785.50px;width:43.00px;text-align:center">連碼</div><div class="sep" style="left:828.00px"></div><div class="si" style="left:828.50px;width:42.75px;text-align:center">不中</div><div class="sep" style="left:870.75px"></div><div class="si" style="left:871.25px;width:54.25px;text-align:center">生肖連</div><div class="sep" style="left:925.00px"></div><div class="si" style="left:925.50px;width:53.75px;text-align:center">尾數連</div>
  </div>
  </div>
</div>
</body></html>
